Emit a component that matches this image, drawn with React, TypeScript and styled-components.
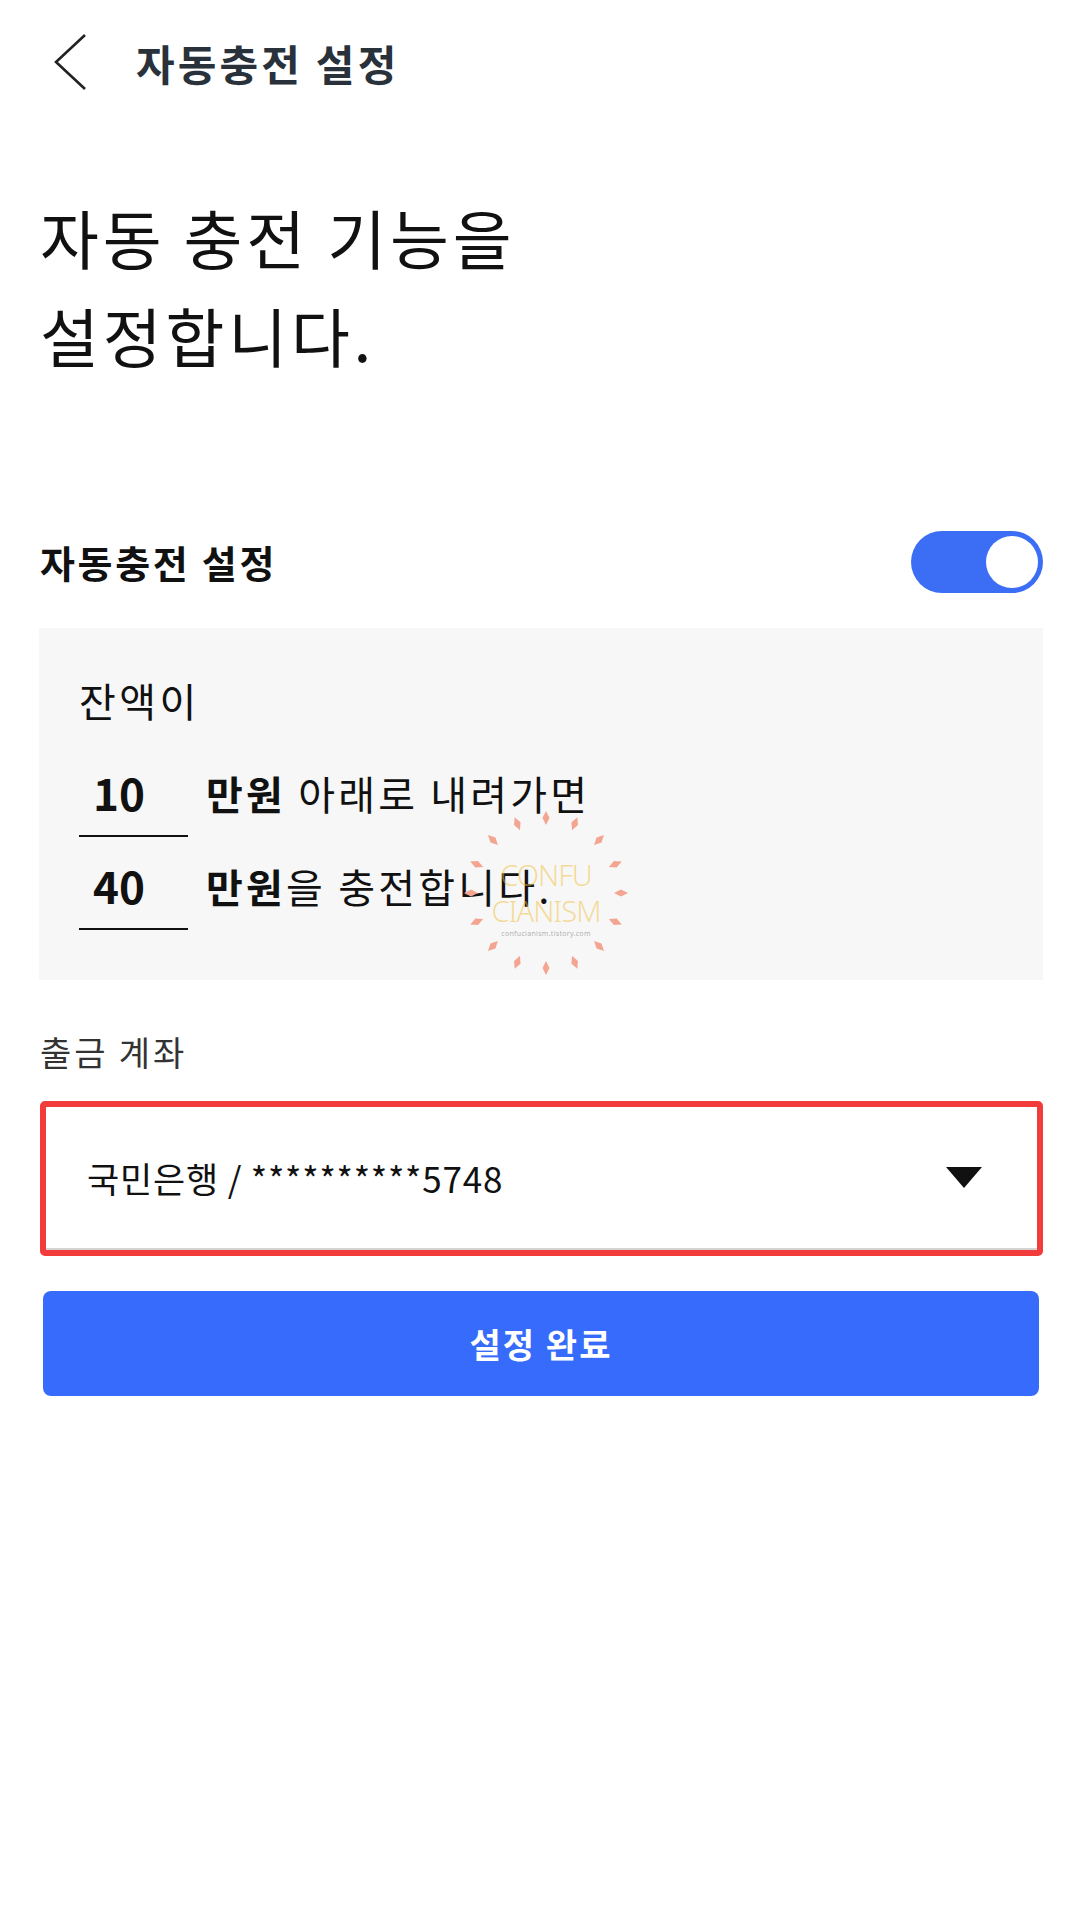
import React from "react";
import styled, { createGlobalStyle } from "styled-components";

const GlobalStyle = createGlobalStyle`
  html, body {
    margin: 0;
    padding: 0;
    background: #ffffff;
  }
  body {
    font-family: "Noto Sans CJK KR", "Noto Sans", sans-serif;
    color: #111111;
  }
  * {
    box-sizing: border-box;
  }
`;

const Page = styled.div`
  width: 1080px;
  min-height: 1920px;
  padding: 0 37px 0 40px;
`;

const Header = styled.header`
  height: 126px;
  display: flex;
  align-items: center;
  padding-left: 12px;
`;

const BackButton = styled.button`
  width: 36px;
  height: 60px;
  padding: 0;
  border: none;
  background: none;
  display: flex;
  cursor: pointer;
`;

const HeaderTitle = styled.h1`
  margin: 0 0 0 48px;
  font-size: 42px;
  font-weight: 700;
  line-height: 60px;
  letter-spacing: 0.075em;
  color: #29313b;
`;

const Heading = styled.h2`
  margin: 61px 0 0;
  font-size: 64px;
  font-weight: 400;
  line-height: 98px;
  letter-spacing: 0.06em;
  word-spacing: 0;
  color: #111111;
`;

const ToggleRow = styled.div`
  margin-top: 148px;
  height: 62px;
  display: flex;
  align-items: center;
  justify-content: space-between;
`;

const ToggleLabel = styled.span`
  font-size: 38px;
  font-weight: 700;
  line-height: 62px;
  letter-spacing: 0.07em;
  color: #111111;
`;

const Switch = styled.button<{ $on: boolean }>`
  position: relative;
  width: 132px;
  height: 62px;
  padding: 0;
  border: none;
  border-radius: 31px;
  background: ${(p) => (p.$on ? "#3b6ef5" : "#cfd3da")};
  cursor: pointer;
  &::after {
    content: "";
    position: absolute;
    top: 5px;
    left: ${(p) => (p.$on ? "75px" : "5px")};
    width: 52px;
    height: 52px;
    border-radius: 50%;
    background: #ffffff;
  }
`;

const InfoBox = styled.section`
  position: relative;
  margin: 35px 0 0 -1px;
  padding: 42px 40px 50px 40px;
  background: #f7f7f7;
`;

const Caption = styled.p`
  margin: 0;
  font-size: 40px;
  line-height: 60px;
  letter-spacing: 0.085em;
`;

const AmountList = styled.div`
  margin-top: 19px;
  display: flex;
  flex-direction: column;
  gap: 5px;
`;

const AmountRow = styled.div`
  display: flex;
  align-items: center;
`;

const AmountField = styled.div`
  width: 109px;
  height: 88px;
  padding-left: 14px;
  display: flex;
  align-items: center;
  border-bottom: 2px solid #111111;
  font-size: 44px;
  font-weight: 700;
`;

const AmountText = styled.span`
  margin-left: 18px;
  font-size: 40px;
  line-height: 60px;
  letter-spacing: 0.08em;
  strong {
    font-weight: 700;
  }
`;

const Watermark = styled.div`
  position: absolute;
  left: 417px;
  top: 175px;
  width: 180px;
  height: 180px;
  pointer-events: none;
  svg {
    position: absolute;
    inset: 0;
  }
`;

const WatermarkText = styled.div`
  position: absolute;
  inset: 0;
  padding-top: 54px;
  display: flex;
  flex-direction: column;
  align-items: center;
  font-family: "Noto Sans", sans-serif;
`;

const MarkWord = styled.span`
  font-size: 29px;
  font-weight: 300;
  line-height: 36px;
  letter-spacing: -1px;
  color: rgba(242, 190, 60, 0.5);
`;

const MarkUrl = styled.span`
  font-size: 7px;
  line-height: 10px;
  color: rgba(120, 120, 120, 0.6);
  letter-spacing: 0.3px;
`;

const FieldLabel = styled.p`
  margin: 47px 0 0;
  font-size: 34px;
  line-height: 50px;
  letter-spacing: 0.085em;
  color: #333333;
`;

const Highlight = styled.div`
  margin-top: 24px;
  border: 6px solid #f23c3c;
  border-radius: 5px;
`;

const AccountSelect = styled.div`
  height: 143px;
  padding: 0 55px 0 41px;
  display: flex;
  align-items: center;
  justify-content: space-between;
  background: #ffffff;
  border-bottom: 2px solid #d4d4d4;
  font-size: 35px;
  letter-spacing: 0.8px;
  color: #111111;
`;

const Caret = styled.span`
  width: 0;
  height: 0;
  border-left: 18px solid transparent;
  border-right: 18px solid transparent;
  border-top: 21px solid #111111;
`;

const SubmitButton = styled.button`
  display: block;
  width: calc(100% - 7px);
  height: 105px;
  margin: 35px 0 0 3px;
  border: none;
  border-radius: 8px;
  background: #366bfb;
  color: #ffffff;
  font-family: inherit;
  font-size: 34px;
  font-weight: 700;
  letter-spacing: 0.06em;
  cursor: pointer;
`;

const rays = Array.from({ length: 16 }, (_, i) => i * 22.5);

const App = () => {
  const amounts = [
    { value: "10", rest: " 아래로 내려가면" },
    { value: "40", rest: "을 충전합니다." },
  ];

  return (
    <>
      <GlobalStyle />
      <Page>
        <Header>
          <BackButton aria-label="뒤로">
            <svg width="36" height="60" viewBox="0 0 36 60">
              <path
                d="M33 2 L4 29 L33 56"
                fill="none"
                stroke="#222"
                strokeWidth="2.6"
              />
            </svg>
          </BackButton>
          <HeaderTitle>자동충전 설정</HeaderTitle>
        </Header>

        <Heading>
          자동 충전 기능을
          <br />
          설정합니다.
        </Heading>

        <ToggleRow>
          <ToggleLabel>자동충전 설정</ToggleLabel>
          <Switch $on={true} aria-label="자동충전 설정" />
        </ToggleRow>

        <InfoBox>
          <Caption>잔액이</Caption>
          <AmountList>
            {amounts.map((a) => (
              <AmountRow key={a.value}>
                <AmountField>{a.value}</AmountField>
                <AmountText>
                  <strong>만원</strong>
                  {a.rest}
                </AmountText>
              </AmountRow>
            ))}
          </AmountList>
          <Watermark>
            <svg width="180" height="180" viewBox="-90 -90 180 180">
              {rays.map((deg) => (
                <polygon
                  key={deg}
                  points="0,-82 3.5,-75 0,-68 -3.5,-75"
                  fill="#f4a592"
                  transform={`rotate(${deg})`}
                />
              ))}
            </svg>
            <WatermarkText>
              <MarkWord>CONFU</MarkWord>
              <MarkWord>CIANISM</MarkWord>
              <MarkUrl>confucianism.tistory.com</MarkUrl>
            </WatermarkText>
          </Watermark>
        </InfoBox>

        <FieldLabel>출금 계좌</FieldLabel>
        <Highlight>
          <AccountSelect>
            <span>국민은행 / **********5748</span>
            <Caret />
          </AccountSelect>
        </Highlight>

        <SubmitButton>설정 완료</SubmitButton>
      </Page>
    </>
  );
};

export default App;
